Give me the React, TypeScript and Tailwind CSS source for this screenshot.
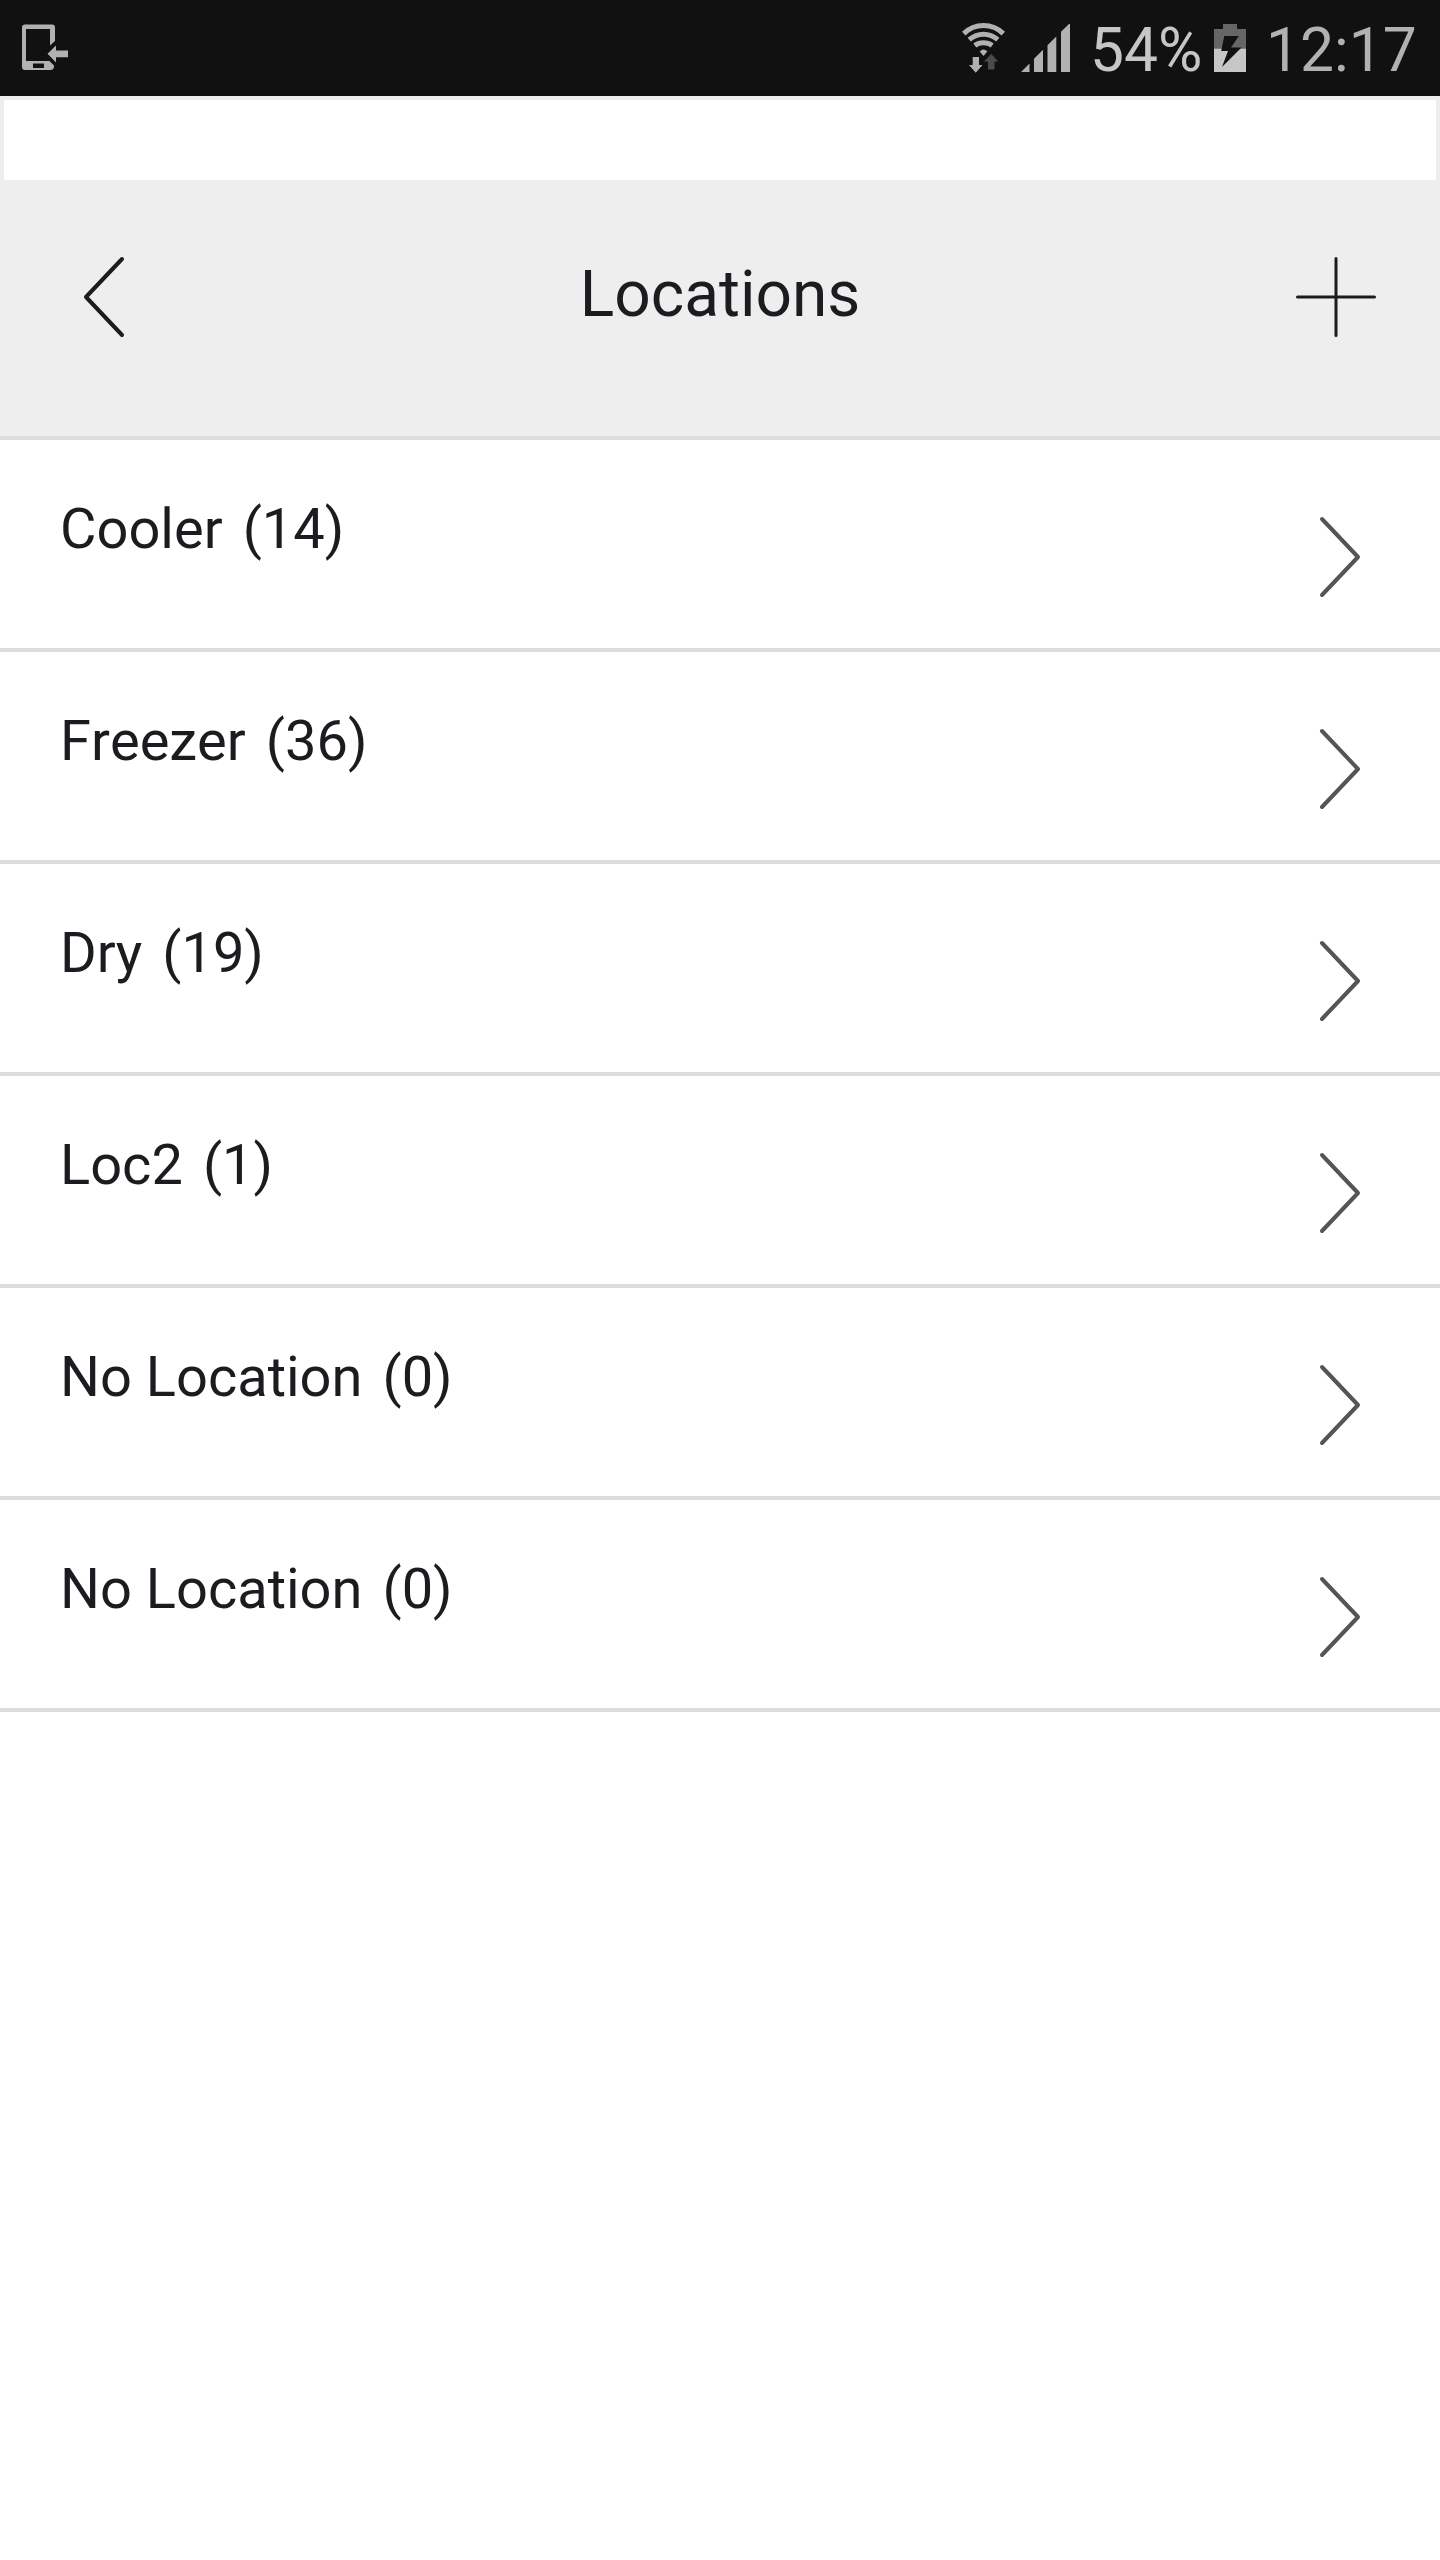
import React from "react";

const locations = [
  { name: "Cooler", count: 14 },
  { name: "Freezer", count: 36 },
  { name: "Dry", count: 19 },
  { name: "Loc2", count: 1 },
  { name: "No Location", count: 0 },
  { name: "No Location", count: 0 },
];

function PhoneTransferIcon() {
  return (
    <svg className="ml-[22px] mt-6 h-[46px] w-[46px] shrink-0" viewBox="0 0 46 46" fill="#b1b1b1">
      <path
        fillRule="evenodd"
        d="M3 0.5H30Q33 0.5 33 3.5V17L28 21.5V5H4V37H27.5L32 41.5V43Q31.500 46 28.500 46H3Q0 46 0 43V3.500Q0 0.500 3 0.500ZM11 39.500V44H22V39.500Z"
      />
      <path d="M25.500 29.800L34 21.500V26.500H46V33.200H34V38.500Z" />
    </svg>
  );
}

function WifiIcon() {
  return (
    <svg className="mt-[22px] h-[52px] w-[44px] shrink-0" viewBox="0 0 44 52" fill="none" stroke="#b1b1b1" strokeWidth="5">
      <path d="M1.700 11.600Q10 3.500 21.500 3.500T41.300 11.600" />
      <path d="M7.200 17.600Q13.500 12.200 21.500 12.200T35.800 17.600" />
      <path d="M12.800 23.600Q16.500 20.800 21.500 20.800T30.200 23.600" />
      <path d="M17.700 29.500Q21.500 25.500 25.300 29.500L21.500 34Z" fill="#b1b1b1" stroke="none" />
      <path d="M10.700 35H17V43H20.500L13.800 50.700L7 43H10.700Z" fill="#b1b1b1" stroke="none" />
      <path d="M26 47.500V39.500H22L29.200 32L36.300 39.500H32.500V47.500Z" fill="#4b4b4b" stroke="none" />
    </svg>
  );
}

function SignalIcon() {
  return (
    <svg className="ml-[15px] mt-6 h-12 w-[49px] shrink-0" viewBox="0 0 49 48" fill="#b1b1b1">
      <path d="M0 48L8.500 39.500V48ZM13 48V34.700L22 25.700V48ZM26.500 48V21.300L35.300 12.500V48ZM40 48V7.800L49 -1V48Z" />
    </svg>
  );
}

function BatteryIcon() {
  return (
    <svg className="mt-6 h-12 w-8 shrink-0" viewBox="0 0 32 48">
      <path d="M0 24.500V5H9V0H23V5H32V24.500Z" fill="#666666" />
      <path d="M0 24.500H32V48H0Z" fill="#c6c6c6" />
      <path d="M10.300 12H24.800L17 23.500H27.500L8 43L14 27H7.200Z" fill="#111111" />
    </svg>
  );
}

function StatusBar() {
  return (
    <div className="flex h-24 items-start bg-[#111111] text-[60.500px] leading-[71px]">
      <PhoneTransferIcon />
      <div className="ml-auto flex items-start pr-[22px]">
        <WifiIcon />
        <SignalIcon />
        <span className="ml-5 mt-[15px] w-[124px] whitespace-nowrap text-[#c6c6c6]">54%</span>
        <BatteryIcon />
        <span className="ml-5 mt-[15px] w-[152px] whitespace-nowrap text-[#b1b1b1]">12:17</span>
      </div>
    </div>
  );
}

function LocationRow({ name, count }: { name: string; count: number }) {
  return (
    <li className="flex h-[212px] items-start justify-between border-b-4 border-[#dddddd] bg-white pl-[60px] pr-[79px]">
      <div className="mt-[56px] flex gap-5 text-[56px] leading-[66px] [font-kerning:none]">
        <span>{name}</span>
        <span>({count})</span>
      </div>
      <svg className="mt-[76px] h-[82px] w-[42px]" viewBox="0 0 42 82" fill="none" stroke="#555555" strokeWidth="4" strokeLinecap="round" strokeLinejoin="round">
        <path d="M3 3L39 41L3 79" />
      </svg>
    </li>
  );
}

export default function App() {
  return (
    <div className="flex min-h-[2560px] w-[1440px] flex-col bg-white font-['Roboto',sans-serif] text-[#1c1b20]">
      <StatusBar />
      <div className="h-[84px] bg-[#eeeeee] px-1 pt-1">
        <div className="h-20 bg-white" />
      </div>
      <header className="flex h-[260px] items-start justify-between border-b-4 border-[#dddddd] bg-[#eeeeee] pl-[83px] pr-[63px]">
        <button aria-label="Back" className="mt-[76px]">
          <svg className="h-[82px] w-[82px]" viewBox="0 0 82 82" fill="none" stroke="#1c1b20" strokeWidth="4" strokeLinecap="round" strokeLinejoin="round">
            <path d="M39 3L3 41L39 79" />
          </svg>
        </button>
        <h1 className="-ml-5 mt-[77px] text-[64px] leading-[76px]">Locations</h1>
        <button aria-label="Add location" className="mt-[76px]">
          <svg className="h-[82px] w-[82px]" viewBox="0 0 82 82" fill="none" stroke="#1c1b20" strokeWidth="3" strokeLinecap="round">
            <path d="M41 2.500V79.500M2.500 41H79.500" />
          </svg>
        </button>
      </header>
      <ul>
        {locations.map((location, index) => (
          <LocationRow key={index} {...location} />
        ))}
      </ul>
    </div>
  );
}
